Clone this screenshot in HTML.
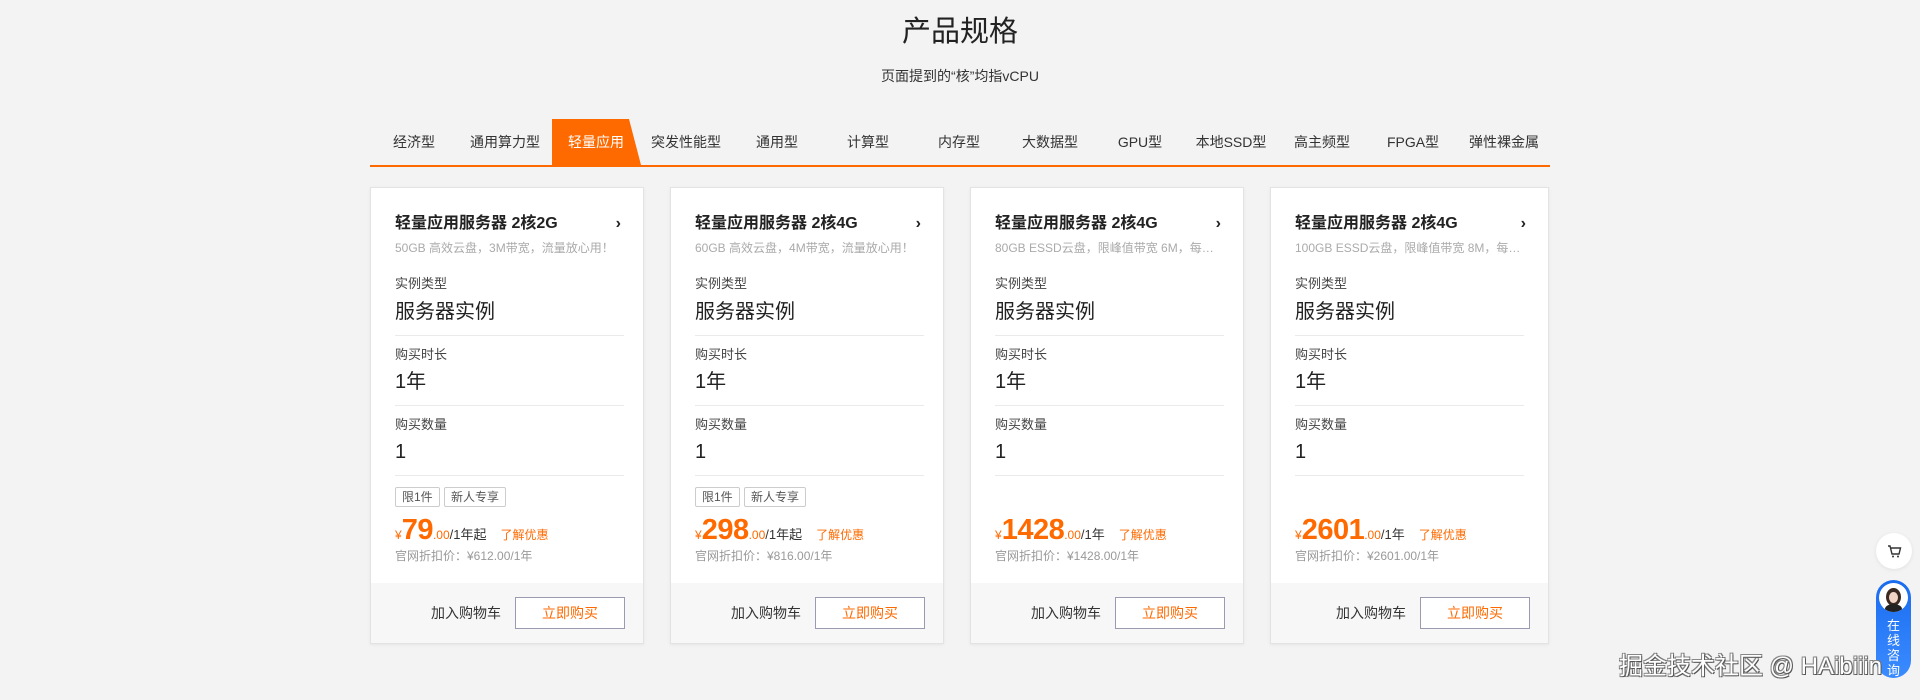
<!DOCTYPE html>
<html><head><meta charset="utf-8"><style>
*{margin:0;padding:0;box-sizing:border-box}
body{width:1920px;height:700px;background:#f3f3f3;font-family:"Liberation Sans","Noto Sans CJK SC",sans-serif;color:#333;position:relative;overflow:hidden}
.a{position:absolute;white-space:nowrap}
.title{left:0;width:1920px;text-align:center;top:14px;font-size:29px;line-height:36px;color:#222}
.sub{left:0;width:1920px;text-align:center;top:66px;font-size:14px;line-height:20px;color:#333}
.tabs{left:370px;top:119px;width:1180px;height:48px;border-bottom:2px solid #ff6a00}
.tab{position:absolute;top:0;height:46px;line-height:46px;font-size:14px;color:#333;text-align:center;width:100px}
.act{color:#fff}
.card{position:absolute;top:187px;width:274px;height:457px;background:#fff;border:1px solid #e3e3e3;box-shadow:0 1px 3px rgba(0,0,0,.06)}
.card .a{left:24px}
.t{font-size:16px;line-height:22px;color:#222;top:25px;font-weight:bold}
.arr{left:auto!important;right:22px;top:27px;font-size:16px;color:#222;font-weight:bold}
.d{font-size:12px;line-height:18px;color:#aaa;top:51px}
.l{font-size:13px;line-height:18px;color:#444}
.v{font-size:20px;line-height:26px;color:#222}
.hr{height:1px;background:#eaeaea;width:229px}
.tag{position:absolute;top:299px;height:20px;line-height:18px;font-size:12px;border:1px solid #ccc;border-radius:2px;color:#555;padding:0 6px}
.pr{top:327px;font-size:13px;line-height:30px;color:#333}
.pr b{font-weight:normal;color:#ff6a00}
.pr .big{font-size:29px;font-family:"Liberation Sans",sans-serif;font-weight:bold;letter-spacing:-0.5px}
.pr .y{font-size:12px}
.pr .c{font-size:12px;color:#ff6a00;margin-left:14px}
.o{top:359px;font-size:12px;line-height:18px;color:#999}
.ft{position:absolute;left:0;right:0;bottom:0;height:60px;background:#f7f7f7}
.btn{position:absolute;right:18px;top:14px;width:110px;height:32px;border:1px solid #9a9ab0;background:#fff;color:#ff6a00;font-size:14px;text-align:center;line-height:30px}
.cart{position:absolute;right:142px;top:14px;line-height:32px;font-size:14px;color:#333}
</style></head><body>
<div class="a title">产品规格</div>
<div class="a sub">页面提到的“核”均指vCPU</div>
<div class="a tabs">
<svg style="position:absolute;left:182px;top:0" width="90" height="46"><polygon points="0,0 77,0 89,46 0,46" fill="#ff6a00"/></svg>
<div class="tab" style="left:-6px">经济型</div>
<div class="tab" style="left:85px">通用算力型</div>
<div class="tab act" style="left:176px">轻量应用</div>
<div class="tab" style="left:266px">突发性能型</div>
<div class="tab" style="left:357px">通用型</div>
<div class="tab" style="left:448px">计算型</div>
<div class="tab" style="left:539px">内存型</div>
<div class="tab" style="left:630px">大数据型</div>
<div class="tab" style="left:720px">GPU型</div>
<div class="tab" style="left:811px">本地SSD型</div>
<div class="tab" style="left:902px">高主频型</div>
<div class="tab" style="left:993px">FPGA型</div>
<div class="tab" style="left:1084px">弹性裸金属</div>
</div>

<div class="card" style="left:370px">
<div class="a t">轻量应用服务器 2核2G</div><div class="a arr">›</div>
<div class="a d">50GB 高效云盘，3M带宽，流量放心用！</div>
<div class="a l" style="top:87px">实例类型</div><div class="a v" style="top:111px">服务器实例</div>
<div class="a hr" style="top:147px"></div>
<div class="a l" style="top:158px">购买时长</div><div class="a v" style="top:181px">1年</div>
<div class="a hr" style="top:217px"></div>
<div class="a l" style="top:228px">购买数量</div><div class="a v" style="top:251px">1</div>
<div class="a hr" style="top:287px"></div>
<div class="tag" style="left:24px">限1件</div><div class="tag" style="left:73px">新人专享</div>
<div class="a pr"><b class="y">¥</b><b class="big">79</b><b class="y">.00</b>/1年起<span class="c">了解优惠</span></div>
<div class="a o">官网折扣价：¥612.00/1年</div>
<div class="ft"><span class="cart">加入购物车</span><div class="btn">立即购买</div></div>
</div>

<div class="card" style="left:670px">
<div class="a t">轻量应用服务器 2核4G</div><div class="a arr">›</div>
<div class="a d">60GB 高效云盘，4M带宽，流量放心用！</div>
<div class="a l" style="top:87px">实例类型</div><div class="a v" style="top:111px">服务器实例</div>
<div class="a hr" style="top:147px"></div>
<div class="a l" style="top:158px">购买时长</div><div class="a v" style="top:181px">1年</div>
<div class="a hr" style="top:217px"></div>
<div class="a l" style="top:228px">购买数量</div><div class="a v" style="top:251px">1</div>
<div class="a hr" style="top:287px"></div>
<div class="tag" style="left:24px">限1件</div><div class="tag" style="left:73px">新人专享</div>
<div class="a pr"><b class="y">¥</b><b class="big">298</b><b class="y">.00</b>/1年起<span class="c">了解优惠</span></div>
<div class="a o">官网折扣价：¥816.00/1年</div>
<div class="ft"><span class="cart">加入购物车</span><div class="btn">立即购买</div></div>
</div>

<div class="card" style="left:970px">
<div class="a t">轻量应用服务器 2核4G</div><div class="a arr">›</div>
<div class="a d">80GB ESSD云盘，限峰值带宽 6M，每…</div>
<div class="a l" style="top:87px">实例类型</div><div class="a v" style="top:111px">服务器实例</div>
<div class="a hr" style="top:147px"></div>
<div class="a l" style="top:158px">购买时长</div><div class="a v" style="top:181px">1年</div>
<div class="a hr" style="top:217px"></div>
<div class="a l" style="top:228px">购买数量</div><div class="a v" style="top:251px">1</div>
<div class="a hr" style="top:287px"></div>
<div class="a pr"><b class="y">¥</b><b class="big">1428</b><b class="y">.00</b>/1年<span class="c">了解优惠</span></div>
<div class="a o">官网折扣价：¥1428.00/1年</div>
<div class="ft"><span class="cart">加入购物车</span><div class="btn">立即购买</div></div>
</div>

<div class="card" style="left:1270px;width:279px">
<div class="a t">轻量应用服务器 2核4G</div><div class="a arr">›</div>
<div class="a d">100GB ESSD云盘，限峰值带宽 8M，每…</div>
<div class="a l" style="top:87px">实例类型</div><div class="a v" style="top:111px">服务器实例</div>
<div class="a hr" style="top:147px"></div>
<div class="a l" style="top:158px">购买时长</div><div class="a v" style="top:181px">1年</div>
<div class="a hr" style="top:217px"></div>
<div class="a l" style="top:228px">购买数量</div><div class="a v" style="top:251px">1</div>
<div class="a hr" style="top:287px"></div>
<div class="a pr"><b class="y">¥</b><b class="big">2601</b><b class="y">.00</b>/1年<span class="c">了解优惠</span></div>
<div class="a o">官网折扣价：¥2601.00/1年</div>
<div class="ft"><span class="cart">加入购物车</span><div class="btn">立即购买</div></div>
</div>

<div class="a" style="left:1876px;top:533px;width:36px;height:36px;border-radius:50%;background:#fff;box-shadow:0 1px 4px rgba(0,0,0,.08)">
<svg width="36" height="36" viewBox="0 0 36 36"><path d="M12 13h2l2 8h7l1.5-6H15" fill="none" stroke="#333" stroke-width="1.4"/><circle cx="17" cy="23.5" r="1" fill="#333"/><circle cx="22" cy="23.5" r="1" fill="#333"/></svg></div>
<div class="a" style="left:1876px;top:580px;width:35px;height:98px;border-radius:18px;background:linear-gradient(#1a6cf0,#3b8bff)">
<div style="position:absolute;left:3px;top:3px;width:29px;height:29px;border-radius:50%;background:#fff;overflow:hidden"><div style="position:absolute;left:7px;top:5px;width:15px;height:18px;border-radius:50%;background:#3a2a22"></div><div style="position:absolute;left:10px;top:9px;width:9px;height:11px;border-radius:50%;background:#f2d5c4"></div><div style="position:absolute;left:6px;top:21px;width:17px;height:10px;border-radius:50% 50% 0 0;background:#222"></div></div>
<div style="position:absolute;left:0;width:35px;top:38px;color:#fff;font-size:13px;line-height:15px;text-align:center">在<br>线<br>咨<br>询</div></div>
<div class="a" style="left:1619px;top:652px;font-size:24px;line-height:30px;color:#fff;text-shadow:1px 1px 0 #555,-1px -1px 0 #888,1px -1px 0 #777,-1px 1px 0 #777">掘金技术社区 @ HAibiiin</div>
</body></html>
